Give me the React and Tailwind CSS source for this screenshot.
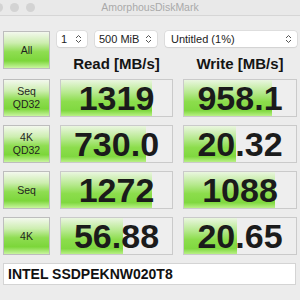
import React from "react";

const rows = [
  { label: ["Seq", "QD32"], read: "1319", readPct: 82, write: "958.1", writePct: 79 },
  { label: ["4K", "QD32"], read: "730.0", readPct: 77, write: "20.32", writePct: 46 },
  { label: ["Seq"], read: "1272", readPct: 82, write: "1088", writePct: 81 },
  { label: ["4K"], read: "56.88", readPct: 56, write: "20.65", writePct: 47 },
];

const btnGreen =
  "bg-[linear-gradient(to_bottom,#f3f8ee_0%,#cdeeb0_30%,#8fdd52_55%,#7cd63a_80%,#c9f5a0_100%)]";
const barGreen =
  "bg-[linear-gradient(to_bottom,#eaf6e0_0%,#b6e98e_35%,#8cdd4c_60%,#80d840_85%,#b9f086_100%)]";

const Chevrons = () => (
  <svg width="7" height="10" viewBox="0 0 7 10" className="shrink-0">
    <path d="M1 4 L3.5 1.5 L6 4 M1 6 L3.5 8.5 L6 6" fill="none" stroke="#555" strokeWidth="1" />
  </svg>
);

const Select = ({ text, className }) => (
  <div
    className={`flex h-[16px] items-center justify-between rounded-[3px] bg-white pl-[4px] pr-[5px] text-[11px] leading-none text-[#222] shadow-[0_0_0_0.5px_#cfcfcf,0_1px_1px_#d8d8d8] ${className}`}
  >
    <span>{text}</span>
    <Chevrons />
  </div>
);

const GreenButton = ({ lines }) => (
  <div
    className={`flex h-[38px] w-[47px] flex-col items-center justify-center border border-[#bdbdbd] ${btnGreen} text-[10.5px] leading-[13px] text-[#1f1f1f]`}
  >
    {lines.map((l) => (
      <span key={l}>{l}</span>
    ))}
  </div>
);

const Meter = ({ value, pct, w }) => (
  <div className={`relative h-[38px] ${w} border border-[#cacaca] bg-[#eeeeee]`}>
    <div className={`absolute inset-y-0 left-0 ${barGreen}`} style={{ width: `${pct}%` }} />
    <div className="relative flex h-full items-center justify-center text-[34px] font-bold leading-none text-[#1b1b1b]">
      {value}
    </div>
  </div>
);

export default function App() {
  return (
    <div
      className="h-[300px] w-[300px] overflow-hidden bg-[#ececec]"
      style={{ fontFamily: '"Liberation Sans", Arial, sans-serif' }}
    >
      {/* title bar */}
      <div className="relative flex h-[16px] items-center justify-center border-b border-[#d6d6d6] bg-[#e9e9e9]">
        <div className="absolute left-[-6px] top-[3px] flex gap-[7px]">
          <span className="h-[9px] w-[9px] rounded-full bg-[#d3d3d3]" />
          <span className="h-[9px] w-[9px] rounded-full bg-[#d3d3d3]" />
          <span className="h-[9px] w-[9px] rounded-full bg-[#d3d3d3]" />
        </div>
        <span className="text-[10.5px] leading-none text-[#a9a9a9]">AmorphousDiskMark</span>
      </div>

      <div className="flex flex-col gap-[8px] pl-[3px] pt-[15px]">
        {/* top row */}
        <div className="flex">
          <GreenButton lines={["All"]} />
          <div className="ml-[7px] flex flex-col">
            <div className="flex gap-[8px]">
              <Select text="1" className="w-[30px]" />
              <Select text="500 MiB" className="w-[62px]" />
              <Select text="Untitled (1%)" className="w-[132px] pl-[6px]" />
            </div>
            <div className="mt-[9px] flex text-[15px] font-bold leading-none text-[#141414]">
              <div className="ml-[3px] w-[113px] text-center">Read [MB/s]</div>
              <div className="ml-[10px] w-[114px] text-center">Write [MB/s]</div>
            </div>
          </div>
        </div>

        {rows.map((r) => (
          <div key={r.label.join("")} className="flex gap-[10px]">
            <GreenButton lines={r.label} />
            <Meter value={r.read} pct={r.readPct} w="w-[113px]" />
            <Meter value={r.write} pct={r.writePct} w="w-[114px]" />
          </div>
        ))}

        <div className="flex h-[22px] w-[293px] items-center border border-[#d4d4d4] bg-white pl-[4px] text-[14px] font-bold text-[#111]">
          INTEL SSDPEKNW020T8
        </div>
      </div>
    </div>
  );
}
